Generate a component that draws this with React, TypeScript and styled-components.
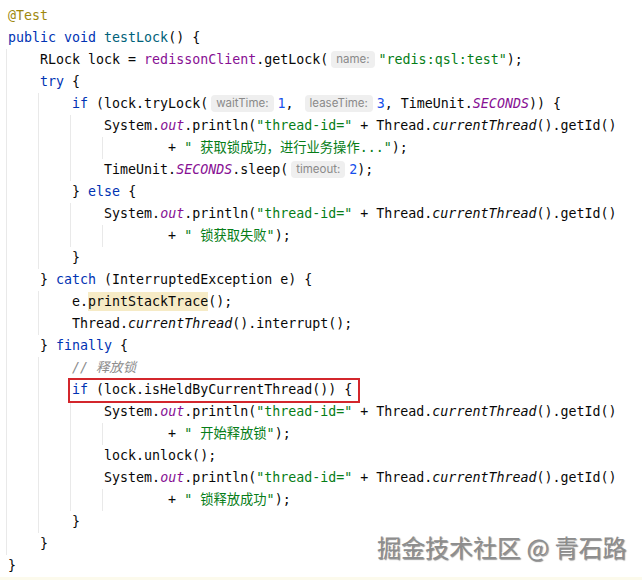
import React from "react";
import styled, { createGlobalStyle } from "styled-components";

const Global = createGlobalStyle`
  html, body { margin: 0; padding: 0; background: #ffffff; }
  #root { width: 642px; height: 580px; }
`;

const Page = styled.div`
  position: relative;
  width: 642px;
  height: 580px;
  background: #ffffff;
  overflow: hidden;
  display: flex;
  flex-direction: column;
`;

const Code = styled.div`
  flex: 1;
  padding-top: 5px;
  font-family: "DejaVu Sans Mono", "Noto Sans CJK SC", monospace;
  font-size: 13.3px;
  color: #080808;
`;

const Line = styled.div<{ $guides?: number }>`
  height: 22px;
  line-height: 22px;
  padding-left: 8px;
  white-space: pre;
  background-image: repeating-linear-gradient(
    to right,
    transparent 0 6px,
    #e9e9e9 6px 7px,
    transparent 7px 32px
  );
  background-repeat: no-repeat;
  background-size: ${(p) => (p.$guides ?? 0) * 32}px 100%;
`;

const FooterStrip = styled.div`
  height: 5px;
  background: #fcfaec;
`;

const Keyword = styled.span`
  color: #0033b3;
`;
const MethodName = styled.span`
  color: #00627a;
`;
const Field = styled.span<{ $italic?: boolean }>`
  color: #871094;
  font-style: ${(p) => (p.$italic ? "italic" : "normal")};
`;
const Italic = styled.span`
  font-style: italic;
`;
const Str = styled.span`
  color: #067d17;
`;
const Num = styled.span`
  color: #1750eb;
`;
const Annotation = styled.span`
  color: #9e880d;
`;
const Comment = styled.span`
  color: #8c8c8c;
  font-style: italic;
`;
const Warn = styled.span`
  background: #f6ebc6;
  padding: 2px 0;
`;
const Hint = styled.span<{ $after?: number }>`
  display: inline-block;
  height: 17px;
  line-height: 17px;
  margin: 0 ${(p) => p.$after ?? 4}px 0 3px;
  padding: 0 5px;
  border-radius: 4px;
  background: #efefef;
  color: #8a8a8a;
  font-family: Inter, "Noto Sans", sans-serif;
  font-size: 11.5px;
  font-style: normal;
  vertical-align: 1px;
`;
const Marked = styled.span`
  position: relative;
  &::after {
    content: "";
    position: absolute;
    left: -4px;
    right: -8px;
    top: -4px;
    bottom: -6px;
    border: 2px solid #d3262c;
  }
`;

const Watermark = styled.div`
  position: absolute;
  left: 377px;
  top: 533px;
  font-family: "Noto Sans CJK SC", sans-serif;
  font-size: 24px;
  line-height: 28px;
  color: #8d8d8d;
  text-shadow: -1px -1px 0 rgba(255, 255, 255, 0.9), 1px 1px 1px rgba(0, 0, 0, 0.45);
  white-space: pre;
`;

const Println = () => (
  <>
    System.<Field $italic>out</Field>.println(<Str>"thread-id="</Str> + Thread.
    <Italic>currentThread</Italic>().getId()
  </>
);

export default function App() {
  return (
    <Page>
      <Global />
      <Code>
        <Line>
          <Annotation>@Test</Annotation>
        </Line>
        <Line>
          <Keyword>public void</Keyword> <MethodName>testLock</MethodName>() {"{"}
        </Line>
        <Line $guides={1}>
          {"    "}RLock lock = <Field>redissonClient</Field>.getLock(
          <Hint>name:</Hint>
          <Str>"redis:qsl:test"</Str>);
        </Line>
        <Line $guides={1}>
          {"    "}
          <Keyword>try</Keyword> {"{"}
        </Line>
        <Line $guides={2}>
          {"        "}
          <Keyword>if</Keyword> (lock.tryLock(<Hint>waitTime:</Hint>
          <Num>1</Num>, <Hint>leaseTime:</Hint>
          <Num>3</Num>, TimeUnit.<Field $italic>SECONDS</Field>)) {"{"}
        </Line>
        <Line $guides={3}>
          {"            "}
          <Println />
        </Line>
        <Line $guides={4}>
          {"                    "}+ <Str>" 获取锁成功，进行业务操作..."</Str>);
        </Line>
        <Line $guides={3}>
          {"            "}TimeUnit.<Field $italic>SECONDS</Field>.sleep(<Hint>timeout:</Hint>
          <Num>2</Num>);
        </Line>
        <Line $guides={2}>
          {"        "}
          {"}"} <Keyword>else</Keyword> {"{"}
        </Line>
        <Line $guides={3}>
          {"            "}
          <Println />
        </Line>
        <Line $guides={4}>
          {"                    "}+ <Str>" 锁获取失败"</Str>);
        </Line>
        <Line $guides={2}>{"        }"}</Line>
        <Line $guides={1}>
          {"    } "}
          <Keyword>catch</Keyword> (InterruptedException e) {"{"}
        </Line>
        <Line $guides={2}>
          {"        "}e.<Warn>printStackTrace</Warn>();
        </Line>
        <Line $guides={2}>
          {"        "}Thread.<Italic>currentThread</Italic>().interrupt();
        </Line>
        <Line $guides={1}>
          {"    } "}
          <Keyword>finally</Keyword> {"{"}
        </Line>
        <Line $guides={2}>
          {"        "}
          <Comment>// 释放锁</Comment>
        </Line>
        <Line $guides={2}>
          {"        "}
          <Marked>
            <Keyword>if</Keyword> (lock.isHeldByCurrentThread()) {"{"}
          </Marked>
        </Line>
        <Line $guides={3}>
          {"            "}
          <Println />
        </Line>
        <Line $guides={4}>
          {"                    "}+ <Str>" 开始释放锁"</Str>);
        </Line>
        <Line $guides={3}>{"            lock.unlock();"}</Line>
        <Line $guides={3}>
          {"            "}
          <Println />
        </Line>
        <Line $guides={4}>
          {"                    "}+ <Str>" 锁释放成功"</Str>);
        </Line>
        <Line $guides={2}>{"        }"}</Line>
        <Line $guides={1}>{"    }"}</Line>
        <Line>{"}"}</Line>
      </Code>
      <FooterStrip />
      <Watermark>掘金技术社区 @ 青石路</Watermark>
    </Page>
  );
}
